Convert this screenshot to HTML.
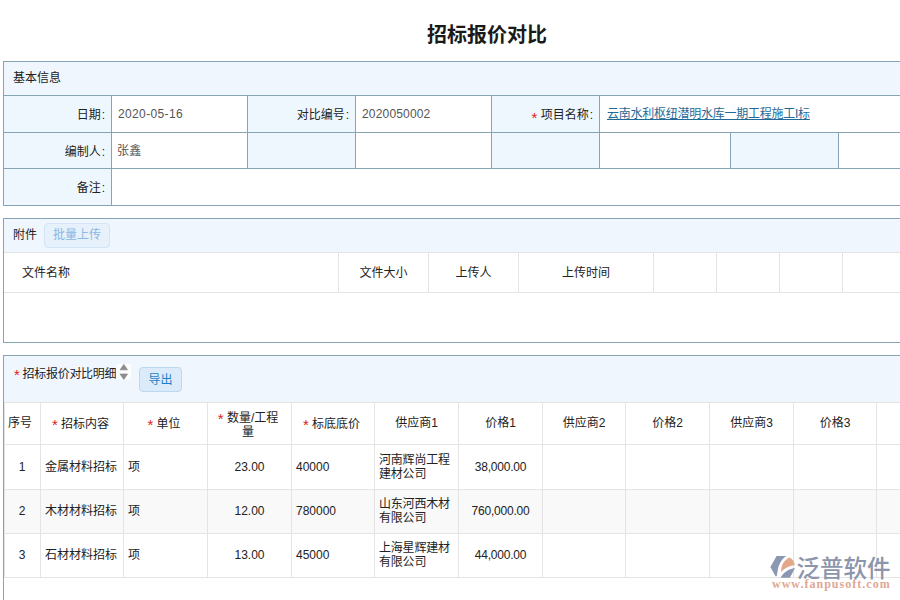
<!DOCTYPE html>
<html lang="zh-CN">
<head>
<meta charset="utf-8">
<title>招标报价对比</title>
<style>
*{box-sizing:border-box;margin:0;padding:0}
html,body{width:900px;height:600px;overflow:hidden;background:#fff}
body{position:relative;font-family:"Liberation Sans","Noto Sans CJK SC",sans-serif;font-size:12px;color:#222}
.abs{position:absolute}
h1{position:absolute;left:387px;top:20px;width:200px;text-align:center;font-size:20px;line-height:30px;font-weight:bold;color:#1a1a1a;white-space:nowrap}
.sec{position:absolute;left:3px;width:920px;border:1px solid #86a5b4;background:#fff;overflow:hidden}
.hd{background:#f0f6fe}
/* basic info */
#s1{top:61px;height:145px}
#s1 .hd{height:34px;line-height:33px;padding-left:9px;border-bottom:1px solid #86a5b4}
#s1 .row{position:absolute;left:0;height:37px;width:920px;border-bottom:1px solid #86a5b4}
#s1 .c{position:absolute;top:0;height:100%;border-right:1px solid #86a5b4;line-height:36px;white-space:nowrap}
#s1 .l{background:#eff7fe;text-align:right;padding-right:6px;color:#222;line-height:38px}
#s1 .l i{font-style:normal;margin-left:1px}
#s1 .v{background:#fff;padding-left:6px;color:#555;letter-spacing:0.17px}
.req{color:#e02020;font-family:"Liberation Sans",sans-serif;font-size:15px;line-height:1;position:relative;top:4px}
a.lk{color:#1f6a96;text-decoration:underline}
/* attachments */
#s2{top:218px;height:125px}
#s2 .hd{height:33px;line-height:33px;padding-left:9px}
.btn{position:absolute;border:1px solid #d3e5f5;background:#e6f1fb;border-radius:4px;text-align:center;color:#8ab8e4}
#s2 table,#s3 table{border-collapse:collapse;table-layout:fixed;position:absolute;left:-1px}
#s2 td{border:1px solid #e4e4e4;height:40px;text-align:center;color:#222;padding-bottom:2px}
/* details */
#s3{top:355px;height:300px}
#s3 .hd{height:46px;position:relative}
#s3 td{border:1px solid #e4e4e4;text-align:center;color:#222;line-height:14px}
#s3 .req{top:2px}
#s3 tr.h td:nth-child(-n+5){padding-right:3px}
#s3 tr.r2 td{padding-bottom:2px}
#s3 tr.h td{padding-bottom:2px}
#s3 tr.h td:nth-child(4){padding-bottom:0}
#s3 tr.h td:first-child{padding-right:5px}
#s3 td.pr{letter-spacing:-0.2px}
#s3 td.sp{letter-spacing:-0.2px;padding-left:5px}
#s3 td.un{padding-left:5px}
#s3 td.no{padding-right:1px}
#s3 td.tl{text-align:left;padding-left:4px}
#s3 tr.alt td{background:#f9f9f9}
</style>
</head>
<body>
<h1>招标报价对比</h1>

<div class="sec" id="s1">
  <div class="hd">基本信息</div>
  <div class="row" style="top:34px">
    <div class="c l" style="left:0;width:108px">日期<i>:</i></div>
    <div class="c v" style="left:108px;width:136px"><span style="letter-spacing:0.36px">2020-05-16</span></div>
    <div class="c l" style="left:244px;width:108px">对比编号<i>:</i></div>
    <div class="c v" style="left:352px;width:136px">2020050002</div>
    <div class="c l" style="left:488px;width:108px"><span class="req">*</span> 项目名称<i>:</i></div>
    <div class="c v" style="left:596px;width:330px;padding-left:7px"><a class="lk" style="letter-spacing:-0.25px">云南水利枢纽潜明水库一期工程施工I标</a></div>
  </div>
  <div class="row" style="top:71px;height:36px">
    <div class="c l" style="left:0;width:108px">编制人<i>:</i></div>
    <div class="c v" style="left:108px;width:136px;padding-left:5px">张鑫</div>
    <div class="c l" style="left:244px;width:108px"></div>
    <div class="c v" style="left:352px;width:136px"></div>
    <div class="c l" style="left:488px;width:108px"></div>
    <div class="c v" style="left:596px;width:131px"></div>
    <div class="c l" style="left:727px;width:108px"></div>
    <div class="c v" style="left:835px;width:100px"></div>
  </div>
  <div class="row" style="top:107px;border-bottom:none">
    <div class="c l" style="left:0;width:108px">备注<i>:</i></div>
  </div>
</div>

<div class="sec" id="s2">
  <div class="hd">附件</div>
  <div class="btn" style="left:40px;top:4px;width:66px;height:25px;line-height:23px">批量上传</div>
  <table style="top:33px;width:930px">
    <colgroup><col style="width:335px"><col style="width:90px"><col style="width:90px"><col style="width:135px"><col style="width:63px"><col style="width:63px"><col style="width:63px"><col></colgroup>
    <tr><td style="text-align:left;padding-left:18px">文件名称</td><td>文件大小</td><td>上传人</td><td>上传时间</td><td></td><td></td><td></td><td></td></tr>
  </table>
</div>

<div class="sec" id="s3">
  <div class="hd">
    <span class="abs" style="left:10px;top:9px;line-height:16px;white-space:nowrap;letter-spacing:-0.3px"><span class="req">*</span> 招标报价对比明细</span>
    <svg class="abs" style="left:112px;top:6px" width="16" height="19" viewBox="0 0 16 19"><rect x="0.5" y="2" width="14.6" height="15.6" fill="#fbfdff"/><path d="M7.8 2.5 L11.5 7.8 L4.1 7.8 Z" fill="#8c8c8c" stroke="#8c8c8c" stroke-width="0.8" stroke-linejoin="round"/><path d="M7.8 17.4 L11.5 12.1 L4.1 12.1 Z" fill="#8c8c8c" stroke="#8c8c8c" stroke-width="0.8" stroke-linejoin="round"/></svg>
    <div class="btn" style="left:135px;top:11px;width:43px;height:25px;line-height:25px;color:#1f7fc4;border-color:#bcd8ee;background:#dcebf9">导出</div>
  </div>
  <table style="top:46px;width:920px;left:0">
    <colgroup><col style="width:36px"><col style="width:83px"><col style="width:84px"><col style="width:84px"><col style="width:83px"><col style="width:84px"><col style="width:84px"><col style="width:83px"><col style="width:84px"><col style="width:84px"><col style="width:83px"><col></colgroup>
    <tr class="h" style="height:42px"><td>序号</td><td><span class="req">*</span> 招标内容</td><td><span class="req">*</span> 单位</td><td><span class="req">*</span> 数量/工程<br>量</td><td><span class="req">*</span> 标底底价</td><td>供应商1</td><td>价格1</td><td>供应商2</td><td>价格2</td><td>供应商3</td><td>价格3</td><td></td></tr>
    <tr style="height:45px"><td class="no">1</td><td class="tl">金属材料招标</td><td class="tl un">项</td><td>23.00</td><td class="tl">40000</td><td class="tl sp">河南辉尚工程<br>建材公司</td><td class="pr">38,000.00</td><td></td><td></td><td></td><td></td><td></td></tr>
    <tr style="height:44px" class="alt r2"><td class="no">2</td><td class="tl">木材材料招标</td><td class="tl un">项</td><td>12.00</td><td class="tl">780000</td><td class="tl sp">山东河西木材<br>有限公司</td><td class="pr">760,000.00</td><td></td><td></td><td></td><td></td><td></td></tr>
    <tr style="height:44px" class="r2"><td class="no">3</td><td class="tl">石材材料招标</td><td class="tl un">项</td><td>13.00</td><td class="tl">45000</td><td class="tl sp">上海星辉建材<br>有限公司</td><td class="pr">44,000.00</td><td></td><td></td><td></td><td></td><td></td></tr>
  </table>
</div>

<!-- watermark -->
<div class="abs" id="wm" style="left:765px;top:550px;width:135px;height:50px">
  <svg class="abs" style="left:0;top:0" width="40" height="34" viewBox="0 0 40 34">
    <path d="M11.6 6.1 L21.2 6.1 C17 9 13.8 14 12.8 20 C12.3 23 12 25 11.7 26.3 L10.5 26.3 L5.4 17 Z" fill="#8c97b3"/>
    <path d="M24.4 7.6 C27.5 9 29.3 12 29.8 15 C25 15.8 19.5 18 16.2 21.9 C15.8 16 19 10 24.4 7.6 Z" fill="#e3a78c"/>
    <path d="M30 18.1 L24.9 27.8 L15.6 27.8 C18.5 22.5 23.5 19 30 18.1 Z" fill="#8c97b3"/>
  </svg>
  <div class="abs" style="left:31.5px;top:2px;font-size:23.5px;line-height:30px;font-weight:500;color:#8c95ab;white-space:nowrap;font-family:'Noto Sans CJK SC',sans-serif">泛普软件</div>
  <div class="abs" style="left:7px;top:26px;font-size:12px;line-height:16px;font-weight:bold;letter-spacing:1.02px;color:#dfa795;white-space:nowrap;font-family:'Liberation Serif',serif">www.fanpusoft.com</div>
</div>
</body>
</html>
